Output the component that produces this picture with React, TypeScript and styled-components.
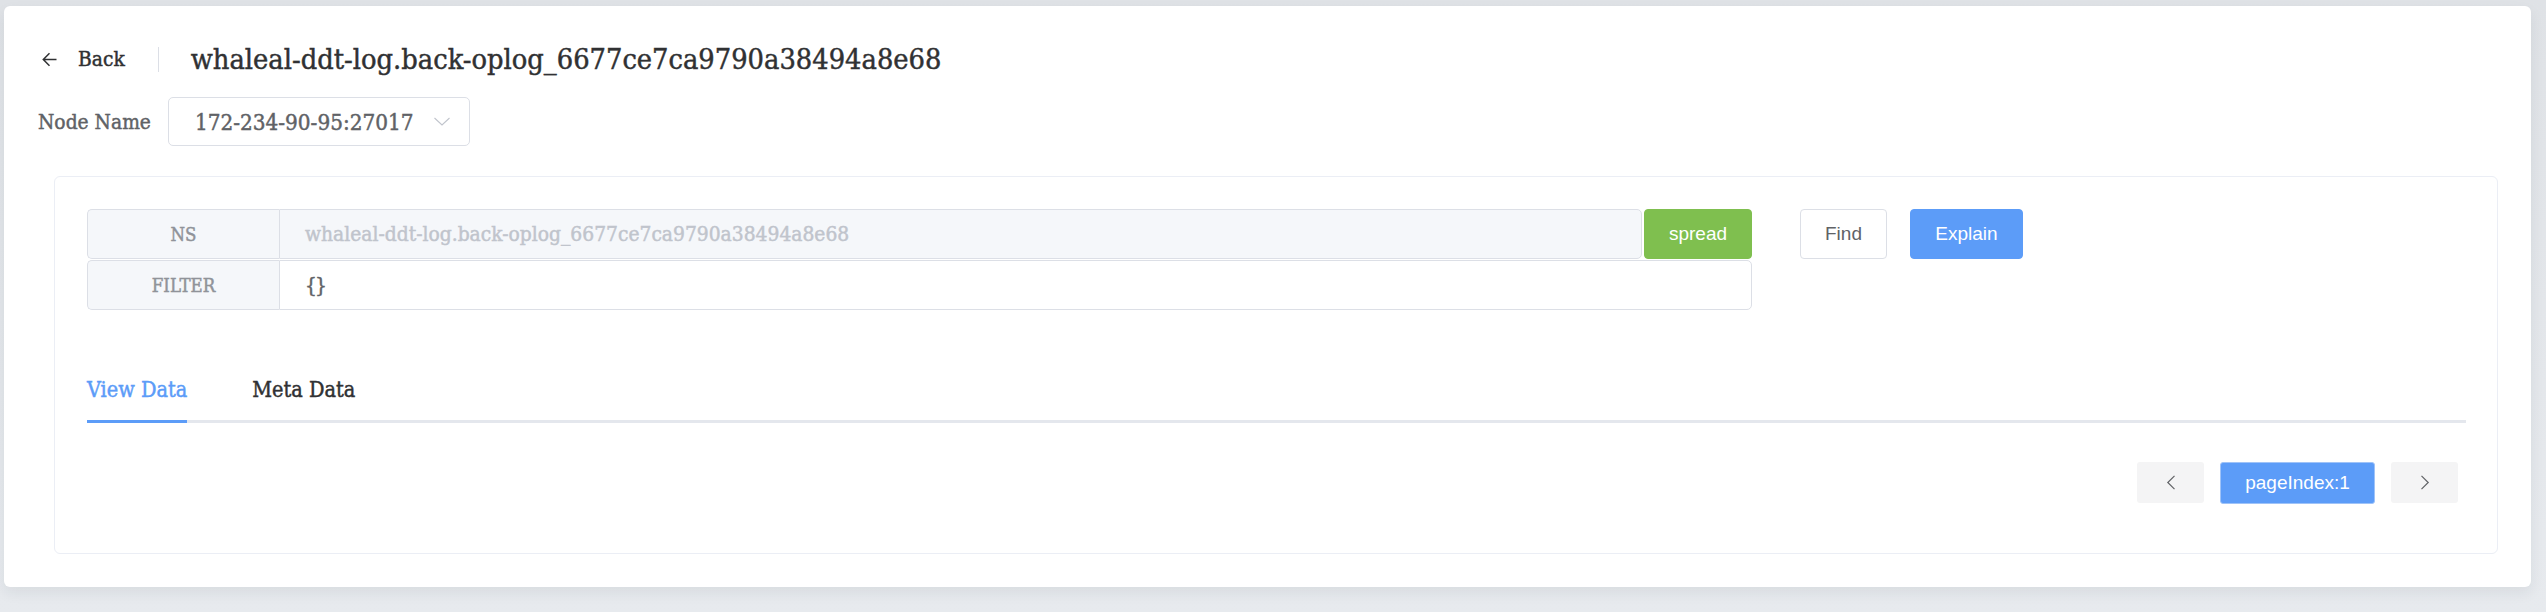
import React from "react";
import styled, { createGlobalStyle } from "styled-components";

const GlobalStyle = createGlobalStyle`
  html, body { margin: 0; padding: 0; background: #e5e8ec; }
  body {
    font-family: "DejaVu Serif", serif;
    font-stretch: condensed;
    color: #303133;
    -webkit-text-stroke: 0.45px currentColor;
  }
  * { box-sizing: border-box; }
`;

const Page = styled.div`
  padding: 6px 15px 26px 4px;
  min-height: 612px;
  background: linear-gradient(#dfe2e6, #e7eaee);
`;

const Card = styled.div`
  background: #fff;
  border-radius: 6px;
  box-shadow: 0 6px 14px rgba(30, 40, 60, 0.07);
  padding: 34px 33px 33px 34px;
`;

const Header = styled.div`
  display: flex;
  align-items: center;
  height: 38px;
`;

const BackLink = styled.button`
  display: flex;
  align-items: center;
  gap: 21px;
  padding: 0 0 0 4px;
  border: none;
  background: none;
  font-family: inherit;
  font-stretch: condensed;
  font-size: 20.8px;
  color: #303133;
  cursor: pointer;
`;

const Divider = styled.span`
  width: 1px;
  height: 25px;
  background: #dcdfe6;
  margin: 0 32px 0 33px;
`;

const Title = styled.h1`
  margin: 0;
  font-size: 28.7px;
  font-weight: normal;
  color: #303133;
  line-height: 38px;
`;

const NodeRow = styled.div`
  display: flex;
  align-items: center;
  margin-top: 19px;
  gap: 20px;
`;

const FieldLabel = styled.span`
  width: 110px;
  font-size: 20.8px;
  color: #606266;
  white-space: nowrap;
`;

const Select = styled.div`
  display: flex;
  align-items: center;
  justify-content: space-between;
  width: 302px;
  height: 49px;
  border: 1px solid #dcdfe6;
  border-radius: 5px;
  padding: 0 19px 0 26px;
  font-size: 22.3px;
  color: #606266;
`;

const Panel = styled.section`
  margin: 30px 0 0 16px;
  border: 1px solid #ebeef5;
  border-radius: 6px;
  padding: 32px 31px 49px 32px;
`;

const QueryRow = styled.div`
  display: flex;
  align-items: flex-start;
`;

const InputTable = styled.div`
  width: 1665px;
  display: flex;
  flex-direction: column;
  gap: 1px;
`;

const InputGroup = styled.div`
  display: flex;
  height: 50px;
`;

const Prepend = styled.div`
  width: 192px;
  flex: none;
  display: flex;
  align-items: center;
  justify-content: center;
  background: #f5f7fa;
  border: 1px solid #dcdfe6;
  border-right: none;
  border-radius: 5px 0 0 5px;
  color: #909399;
  font-size: 18.5px;
`;

const Field = styled.div<{ $disabled?: boolean }>`
  flex: 1;
  display: flex;
  align-items: center;
  padding-left: 25px;
  border: 1px solid #dcdfe6;
  border-radius: 0 5px 5px 0;
  background: ${(p) => (p.$disabled ? "#f5f7fa" : "#fff")};
  color: ${(p) => (p.$disabled ? "#c0c4cc" : "#606266")};
  font-size: 20.8px;
  white-space: nowrap;
`;

const Braces = styled.span`
  letter-spacing: -2px;
`;

const SansButton = styled.button<{ $variant: "green" | "plain" | "blue" }>`
  flex: none;
  height: 50px;
  border-radius: 4px;
  font-family: "Liberation Sans", Arial, sans-serif;
  font-stretch: normal;
  font-size: 19px;
  -webkit-text-stroke: 0;
  cursor: pointer;
  border: 1px solid
    ${(p) =>
      p.$variant === "green" ? "#7fbf4f" : p.$variant === "blue" ? "#5c9cf8" : "#dcdfe6"};
  background: ${(p) =>
    p.$variant === "green" ? "#7fbf4f" : p.$variant === "blue" ? "#5c9cf8" : "#fff"};
  color: ${(p) => (p.$variant === "plain" ? "#606266" : "#fff")};
`;

const SpreadButton = styled(SansButton)`
  width: 108px;
  margin-left: 2px;
`;

const FindButton = styled(SansButton)`
  width: 87px;
  margin-left: 48px;
`;

const ExplainButton = styled(SansButton)`
  width: 113px;
  margin-left: 23px;
`;

const TabsNav = styled.div`
  display: flex;
  margin-top: 49px;
  border-bottom: 3px solid #e4e7ed;
`;

const Tab = styled.div<{ $active?: boolean }>`
  display: flex;
  align-items: center;
  padding: 0 32px;
  margin-bottom: -3px;
  border-bottom: 3px solid ${(p) => (p.$active ? "#5c9cf8" : "transparent")};
  height: 64px;
  font-size: 21.5px;
  color: ${(p) => (p.$active ? "#5c9cf8" : "#303133")};
  &:first-child {
    padding-left: 0;
    padding-right: 0;
    margin-right: 33px;
  }
`;

const Pagination = styled.div`
  display: flex;
  justify-content: flex-end;
  align-items: flex-start;
  gap: 16px;
  margin-top: 39px;
  padding-right: 8px;
`;

const PageArrow = styled.button`
  width: 67px;
  height: 41px;
  border: none;
  border-radius: 3px;
  background: #f4f4f5;
  display: flex;
  align-items: center;
  justify-content: center;
  padding: 0;
`;

const PageIndex = styled.button`
  width: 155px;
  height: 42px;
  border: 1px solid #9fc3f8;
  border-radius: 3px;
  background: #5c9cf8;
  color: #fff;
  font-family: "Liberation Sans", Arial, sans-serif;
  font-stretch: normal;
  font-size: 19px;
  -webkit-text-stroke: 0;
  padding: 0;
`;

const BackArrow = () => (
  <svg width="15" height="15" viewBox="0 0 15 15" fill="none" stroke="#303133" strokeWidth="1.5">
    <path d="M14.5 7.5H1.3M7.5 1.3L1.3 7.5 7.5 13.7" />
  </svg>
);

const ChevronDown = () => (
  <svg width="16" height="9" viewBox="0 0 16 9" fill="none" stroke="#c0c4cc" strokeWidth="1.1">
    <path d="M0.5 1L8 8 15.5 1" />
  </svg>
);

const Chevron = ({ dir }: { dir: "left" | "right" }) => (
  <svg width="10" height="15" viewBox="0 0 10 15" fill="none" stroke="#606266" strokeWidth="1.2">
    <path d={dir === "left" ? "M8.5 0.8L1.8 7.5 8.5 14.2" : "M1.5 0.8L8.2 7.5 1.5 14.2"} />
  </svg>
);

export default function App() {
  const ns = "whaleal-ddt-log.back-oplog_6677ce7ca9790a38494a8e68";
  return (
    <>
      <GlobalStyle />
      <Page>
        <Card>
          <Header>
            <BackLink>
              <BackArrow />
              Back
            </BackLink>
            <Divider />
            <Title>{ns}</Title>
          </Header>
          <NodeRow>
            <FieldLabel>Node Name</FieldLabel>
            <Select>
              <span>172-234-90-95:27017</span>
              <ChevronDown />
            </Select>
          </NodeRow>
          <Panel>
            <QueryRow>
              <InputTable>
                <InputGroup>
                  <Prepend>NS</Prepend>
                  <Field $disabled>{ns}</Field>
                  <SpreadButton $variant="green">spread</SpreadButton>
                </InputGroup>
                <InputGroup>
                  <Prepend>FILTER</Prepend>
                  <Field>
                    <Braces>{"{}"}</Braces>
                  </Field>
                </InputGroup>
              </InputTable>
              <FindButton $variant="plain">Find</FindButton>
              <ExplainButton $variant="blue">Explain</ExplainButton>
            </QueryRow>
            <TabsNav>
              <Tab $active>View Data</Tab>
              <Tab>Meta Data</Tab>
            </TabsNav>
            <Pagination>
              <PageArrow>
                <Chevron dir="left" />
              </PageArrow>
              <PageIndex>pageIndex:1</PageIndex>
              <PageArrow>
                <Chevron dir="right" />
              </PageArrow>
            </Pagination>
          </Panel>
        </Card>
      </Page>
    </>
  );
}
